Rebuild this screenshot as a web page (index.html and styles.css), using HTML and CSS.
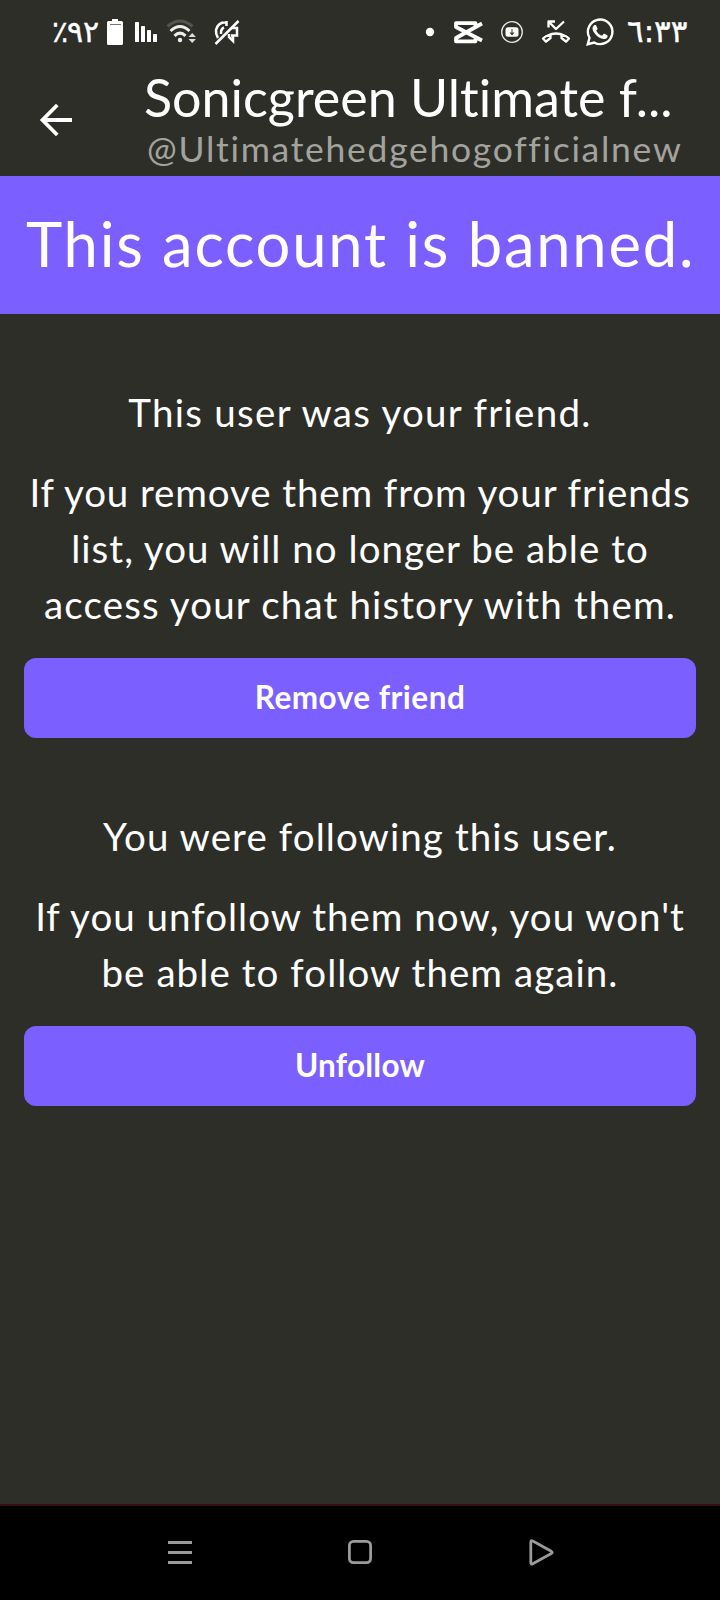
FILE: index.html
```html
<!DOCTYPE html>
<html lang="en">
<head>
<meta charset="utf-8">
<title>Sonicgreen Ultimate</title>
<link rel="stylesheet" href="styles.css">
</head>
<body>
<div class="screen">
  <div class="status">
    <div class="status-left">
      <span class="battery-level"><span class="percent">٪</span><span class="level">٩٢</span></span>
      <svg class="icon-battery" width="18" height="28" viewBox="106 18 18 28"><path d="M112 19h6v2h3.500a1.500 1.500 0 0 1 1.500 1.500v21a1.500 1.500 0 0 1-1.500 1.500h-13a1.500 1.500 0 0 1-1.500-1.500v-21a1.500 1.500 0 0 1 1.500-1.500h3.500z" fill="#fff"/><path d="M110 24.500h11" stroke="#777772" stroke-width="1"/></svg>
      <svg class="icon-signal" width="24" height="22" viewBox="134 21 24 22" fill="#fff"><rect x="135" y="22" width="4" height="20" rx=".6"/><rect x="141" y="26" width="4" height="16" rx=".6"/><rect x="147" y="30" width="4" height="12" rx=".6"/><rect x="153" y="34" width="4" height="8" rx=".6"/></svg>
      <svg class="icon-wifi" width="32" height="26" viewBox="166 18 32 26" fill="none"><path d="M167.500 26.500Q180 15.500 192.500 26.500" stroke="#555550" stroke-width="3"/><path d="M170.500 31Q180 22 189.500 31M174.500 35.800Q180 30.500 185.500 35.800" stroke="#eee" stroke-width="3"/><circle cx="180" cy="40" r="2.200" fill="#eee"/><path d="M188.500 37l3.700-4 3.700 4zM188.500 39l3.700 4 3.700-4z" fill="#ddd"/></svg>
      <svg class="icon-mute" width="28" height="28" viewBox="213 18 28 28" fill="none" stroke="#fff" stroke-width="2.500"><path d="M215.500 44L238.500 21"/><path d="M226 22.300Q218 22 216 30Q215.600 34 218 38M224 27.500Q220.500 29 221 34M226.500 21v5M231 28h6v7.500h-6M229 34v3l4 4v-5"/></svg>
    </div>
    <div class="status-right">
      <svg class="icon-dot" width="10" height="10" viewBox="425 27 10 10"><circle cx="430" cy="32" r="4.200" fill="#fff"/></svg>
      <svg class="icon-cut" width="30" height="24" viewBox="453 20 30 24" fill="none" stroke="#fff" stroke-width="3.800" stroke-linejoin="round"><path d="M482 23.500L456 38v3.300h19.500V38M482 40.500L456 27v-3.800h19.500V26"/></svg>
      <svg class="icon-video" width="24" height="24" viewBox="500 20 24 24"><circle cx="512" cy="32" r="10.300" fill="none" stroke="#e8e8e4" stroke-width="1.300"/><rect x="505.500" y="27.300" width="13" height="9.400" rx="2.500" fill="#fff"/><path d="M512 29v3.500" stroke="#777" stroke-width="1.500"/><path d="M509.500 32.500h5l-2.500 3z" fill="#33332d"/></svg>
      <svg class="icon-missed" width="30" height="26" viewBox="541 18 30 26" fill="none" stroke="#fff" stroke-width="2.300" stroke-linejoin="round"><path d="M548.500 27.500v-6h6.500M549 22l7 7 8-7.500"/><path d="M548 35.500Q556 31.500 564 35.500"/><path d="M550.500 34.500v3.500l-4.500 3.700-3-3.200q2.500-2.800 7.500-4zM561.500 34.500v3.500l4.500 3.700 3-3.200q-2.500-2.800-7.500-4z"/></svg>
      <svg class="icon-whatsapp" width="30" height="30" viewBox="0 0 24 24" fill="#fff"><path d="M17.472 14.382c-.297-.149-1.758-.867-2.030-.967-.273-.099-.471-.148-.670.150-.197.297-.767.966-.940 1.164-.173.199-.347.223-.644.075-.297-.150-1.255-.463-2.390-1.475-.883-.788-1.480-1.761-1.653-2.059-.173-.297-.018-.458.130-.606.134-.133.298-.347.446-.520.149-.174.198-.298.298-.497.099-.198.050-.371-.025-.520-.075-.149-.669-1.612-.916-2.207-.242-.579-.487-.500-.669-.510-.173-.008-.371-.010-.570-.010-.198 0-.520.074-.792.372-.272.297-1.040 1.016-1.040 2.479 0 1.462 1.065 2.875 1.213 3.074.149.198 2.096 3.200 5.077 4.487.709.306 1.262.489 1.694.625.712.227 1.360.195 1.871.118.571-.085 1.758-.719 2.006-1.413.248-.694.248-1.289.173-1.413-.074-.124-.272-.198-.570-.347z"/><path d="M2.200 21.800l1.400-5.100A9.800 9.800 0 1 1 7.300 20.400z" fill="none" stroke="#fff" stroke-width="1.900"/></svg>
      <span class="clock">٦:٣٣</span>
    </div>
  </div>

  <header class="header">
    <svg class="back" width="34" height="34" viewBox="39 103 34 34" fill="none" stroke="#fff" stroke-width="3.800"><path d="M72 120H42.500M57.300 105L42.500 120L57.300 135"/></svg>
    <div class="names">
      <div class="title">Sonicgreen Ultimate f...</div>
      <div class="handle">@Ultimatehedgehogofficialnew</div>
    </div>
  </header>

  <div class="banner">This account is banned.</div>

  <main class="content">
    <section class="block">
      <p class="lead friend-lead">This user was your friend.</p>
      <p class="text"><span class="line l1">If you remove them from your friends</span> <span class="line l2">list, you will no longer be able to</span> <span class="line l3">access your chat history with them.</span></p>
      <button class="action remove">Remove friend</button>
    </section>
    <section class="block">
      <p class="lead follow-lead">You were following this user.</p>
      <p class="text"><span class="line l4">If you unfollow them now, you won't</span> <span class="line l5">be able to follow them again.</span></p>
      <button class="action unfollow">Unfollow</button>
    </section>
  </main>

  <nav class="navbar">
    <svg width="180" height="92" viewBox="90 1508 180 92" stroke="#9b9999" stroke-width="3"><path d="M168 1542.500h24M168 1552.500h24M168 1562.500h24"/></svg>
    <svg width="180" height="92" viewBox="270 1508 180 92" fill="none" stroke="#9b9999" stroke-width="2.800"><rect x="349.400" y="1541.400" width="21.200" height="21.200" rx="4"/></svg>
    <svg width="180" height="92" viewBox="450 1508 180 92" fill="none" stroke="#9b9999" stroke-width="2.800" stroke-linejoin="round"><path d="M530.800 1542.300q0-2.500 2-1.300l18.500 10.300q1.800 1.200 0 2.200l-18.500 10.300q-2 1.200-2-1.300z"/></svg>
  </nav>
</div>
</body>
</html>
```
FILE: styles.css
```css
* { box-sizing: border-box; }
body { margin: 0; background: #2e2e29; }
svg { display: block; flex: none; }
.screen {
  width: 720px;
  height: 1600px;
  display: flex;
  flex-direction: column;
  background: #2e2e29;
  color: #fff;
  font-family: Lato, "Open Sans", sans-serif;
  font-variant-ligatures: none;
  overflow: hidden;
}

.status {
  height: 64px;
  display: flex;
  justify-content: space-between;
  padding: 0 31px 0 52px;
}
.status-left, .status-right { display: flex; height: 64px; align-items: center; }
.battery-level {
  display: flex;
  width: 54px;
  height: 38px;
  font: 30px/37px "DejaVu Sans", sans-serif;
  -webkit-text-stroke: .4px #fff;
}
.percent { width: 15px; }
.level { width: 34px; letter-spacing: .5px; }
.icon-signal { margin-left: 10px; }
.icon-wifi { margin-left: 8px; margin-bottom: 2px; }
.icon-mute { margin-left: 15px; }
.icon-cut { margin-left: 18px; }
.icon-video { margin-left: 17px; }
.icon-missed { margin-left: 17px; margin-bottom: 2px; }
.icon-whatsapp { margin-left: 14px; }
.clock {
  width: 62px;
  height: 38px;
  margin-left: 12px;
  font: 31px/37px "DejaVu Sans", sans-serif;
  letter-spacing: .4px;
  white-space: nowrap;
  -webkit-text-stroke: .4px #fff;
}

.header {
  height: 112px;
  display: flex;
  align-items: flex-start;
  padding: 2px 0 0 39px;
}
.back { margin-top: 37px; }
.names { margin-left: 71px; white-space: nowrap; }
.title { font-size: 52px; line-height: 62px; }
.handle {
  padding-left: 3px;
  font-size: 35.5px;
  line-height: 42px;
  letter-spacing: 1.72px;
  color: #a3a39d;
}

.banner {
  height: 138px;
  padding: 0 0 4px 26px;
  background: #7c5fff;
  font-size: 61.5px;
  line-height: 134px;
  letter-spacing: 1.77px;
  white-space: nowrap;
}

.content { flex: 1; padding: 70px 24px 0; text-align: center; }
.block { display: flex; flex-direction: column; margin-bottom: 70px; }
.lead, .text { margin: 0; font-size: 38.5px; line-height: 56px; }
.lead { margin-bottom: 24px; }
.text { margin-bottom: 26px; }
.line { display: block; white-space: nowrap; }
.friend-lead { letter-spacing: 1.29px; }
.l1 { letter-spacing: .893px; }
.l2 { letter-spacing: 1.029px; }
.l3 { letter-spacing: 1.15px; }
.follow-lead { letter-spacing: 1.09px; }
.l4 { letter-spacing: 1.02px; }
.l5 { letter-spacing: 1.07px; }
.action {
  height: 80px;
  border: 0;
  border-radius: 12px;
  padding: 0 0 3px;
  background: #7c5fff;
  color: #fff;
  font: bold 31.5px/38px Lato, "Open Sans", sans-serif;
}
.remove { letter-spacing: .5px; }
.unfollow { letter-spacing: .25px; }

.navbar {
  height: 96px;
  display: flex;
  justify-content: center;
  border-top: 2px solid #360c10;
  padding-top: 2px;
  background: #000;
}
```
